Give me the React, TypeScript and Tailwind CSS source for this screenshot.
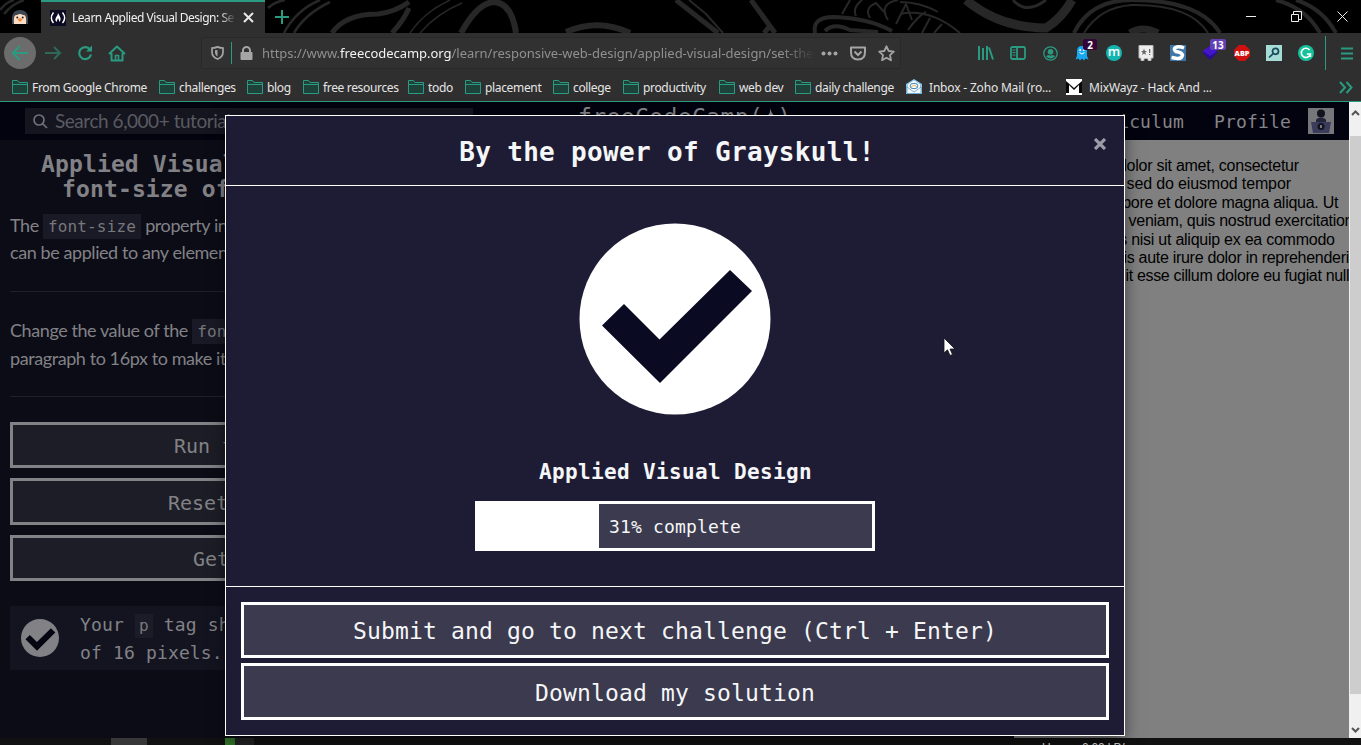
import React from "react";

const UI = "font-['Noto_Sans',sans-serif]";
const MONO = "font-['DejaVu_Sans_Mono',monospace]";
const LATO = "font-['Lato',sans-serif]";

function Doodles() {
  return (
    <svg className="absolute inset-0" width="1361" height="33" viewBox="0 0 1361 33" fill="none" stroke="#272727" strokeWidth="4">
      <path d="M0 10 Q6 2 14 0M4 14 Q12 4 24 0" strokeWidth="2.5" />
      <path d="M268 8 Q274 2 285 0M284 33 Q296 10 320 0M294 33 Q305 14 330 2" strokeWidth="2.5" />
      <path d="M332 33 Q345 14 378 14 Q395 12 409 2 M409 8 Q404 20 392 33" strokeWidth="5" />
      <path d="M420 33 Q436 14 462 3M410 33 Q424 12 450 0" strokeWidth="1.5" />
      <path d="M461 33 Q478 2 495 2 Q512 4 516 33" strokeWidth="6" />
      <path d="M566 32 Q598 18 630 33" strokeWidth="6" />
      <path d="M676 0 L718 33" strokeWidth="5" />
      <path d="M689 0 L706 14 L723 33" strokeWidth="2" />
      <path d="M751 0 L775 33M764 33 L770 26" strokeWidth="5" />
      <path d="M815 33 Q812 17 834 17 Q868 18 892 31M825 31 Q834 22 850 30 L878 32" strokeWidth="4" />
      <path d="M842 14 L850 0M856 16 Q852 8 862 0M870 18 Q864 8 876 3 L886 14M888 20 Q878 4 898 0M896 24 L906 4 L912 20M908 30 Q918 16 926 12M922 33 L930 18M934 33 L942 24 M938 12 Q920 2 900 2" strokeWidth="2" />
      <path d="M900 14 Q930 8 960 33" strokeWidth="2" />
      <path d="M966 0 Q1000 28 1046 28 Q1062 18 1072 0" strokeWidth="9" />
      <path d="M1013 0 Q1026 15 1046 0" strokeWidth="3" />
      <path d="M1074 33 Q1090 0 1132 0 Q1200 0 1220 33" strokeWidth="4" />
      <path d="M1084 33 Q1100 7 1132 5 Q1190 4 1208 33" strokeWidth="2" />
      <path d="M1130 33 Q1142 25 1158 33" strokeWidth="7" />
      <path d="M1276 0 Q1306 8 1320 33M1296 0 Q1322 8 1336 33" strokeWidth="4" />
    </svg>
  );
}

function TabBar() {
  return (
    <div className="relative h-[33px] shrink-0 bg-black">
      <Doodles />
      <div className="relative flex h-full items-center">
        <div className="flex w-[41px] justify-center pr-[2px]">
          <svg width="18" height="16" viewBox="0 0 18 16">
            <path d="M1 15V8Q2 1 9 1Q16 1 17 8V15Z" fill="#3d4752" />
            <path d="M3 15Q2 5 6 6Q9 4 12 6Q16 5 15 15Z" fill="#fbdcc4" />
            <circle cx="6.3" cy="8.5" r="1" fill="#222" />
            <circle cx="11.7" cy="8.5" r="1" fill="#222" />
            <path d="M6.5 10.5L9 9L11.5 10.5L9 13Z" fill="#f0883a" />
          </svg>
        </div>
        <div className="flex h-full w-[224px] items-center border-t-2 border-[#2a9a80] bg-[#2f2f2f] pl-[9px]">
          <svg width="16" height="16" viewBox="0 0 16 16">
            <rect width="16" height="16" fill="#0a0a23" />
            <path d="M3.5 2.5Q-.8 8 3.5 13M12.500 2.500Q16.800 8 12.500 13" stroke="#fff" strokeWidth="1.400" fill="none" />
            <path d="M8 3Q9.500 5.500 10.500 8Q11 10.500 9.500 12L8.500 9L8 8L6.500 12Q4.500 10 6 7.500Q8 5.500 8 3Z" fill="#fff" />
          </svg>
          <div className={`${UI} ml-[6px] w-[164px] overflow-hidden whitespace-nowrap text-[12px] tracking-[-0.47px] text-[#f0f0f0] mask-r-from-90% mask-r-to-100%`}>
            Learn Applied Visual Design: Se
          </div>
          <svg className="ml-[7px]" width="11" height="11" viewBox="0 0 11 11" stroke="#e8e8e8" strokeWidth="2">
            <path d="M1 1L10 10M10 1L1 10" />
          </svg>
        </div>
        <svg className="ml-[10px]" width="14" height="14" viewBox="0 0 14 14" stroke="#2a9a80" strokeWidth="2">
          <path d="M7 0V14M0 7H14" />
        </svg>
        <div className="ml-auto flex items-center gap-[35px] pr-[13px] text-[#eee]">
          <svg width="10" height="10" stroke="currentColor"><path d="M0 4.500H10" /></svg>
          <svg width="11" height="11" fill="none" stroke="currentColor"><path d="M.5 3.500H7.500V10.500H.5ZM2.500 3.500V.5H10.500V8.500H7.500" /></svg>
          <svg width="11" height="11" stroke="currentColor"><path d="M.5 .5L10.500 10.500M10.500 .5L.5 10.500" /></svg>
        </div>
      </div>
    </div>
  );
}

function Badge({ children, className }: { children: React.ReactNode; className: string }) {
  return (
    <span className={`absolute flex h-[11px] items-center justify-center rounded-[2px] text-[10px] font-bold leading-none text-white font-['Open_Sans',sans-serif] ${className}`}>
      {children}
    </span>
  );
}

function Cell({ children }: { children: React.ReactNode }) {
  return <div className="relative flex w-8 items-center justify-center">{children}</div>;
}

function NavBar() {
  return (
    <div className="flex h-10 shrink-0 items-center text-[#2a9a80]">
      <div className="ml-1 flex size-8 items-center justify-center rounded-full bg-[#6c6c6c]">
        <svg width="18" height="16" viewBox="0 0 18 16" fill="none" stroke="currentColor" strokeWidth="2.200"><path d="M17 8H2M9 1L2 8L9 15" /></svg>
      </div>
      <svg className="ml-[9px] opacity-55" width="17" height="14" viewBox="0 0 17 14" fill="none" stroke="currentColor" strokeWidth="2"><path d="M0 7H15M9 1L15 7L9 13" /></svg>
      <svg className="ml-[15px]" width="16" height="16" viewBox="0 0 16 16" fill="none" stroke="currentColor" strokeWidth="2.200">
        <path d="M13 4.500A6 6 0 1 0 14 9.500" /><path d="M15 .5V6.500H9Z" fill="currentColor" stroke="none" />
      </svg>
      <svg className="ml-[15px]" width="18" height="17" viewBox="0 0 18 17" fill="none" stroke="currentColor" strokeWidth="2">
        <path d="M1 9L9 1.500L17 9M3.500 8V15.500H14.500V8" strokeLinejoin="round" /><path d="M7.500 15V10.500H10.500V15" strokeWidth="1.600" />
      </svg>
      <div className="ml-[75px] flex h-8 w-[700px] items-center rounded-[2px] border border-[#292929] bg-[#313131] text-[#a5a5a5]">
        <svg className="ml-[9px]" width="13" height="14" viewBox="0 0 13 14" fill="none" stroke="currentColor" strokeWidth="1.700">
          <path d="M1 2Q4 2 6.500 .9Q9 2 12 2V6Q12 11 6.500 13Q1 11 1 6Z" /><path d="M6.500 4V10.500Q4 9 4 6.500V4.200Z" fill="currentColor" stroke="none" />
        </svg>
        <div className="ml-[7px] h-[22px] w-px bg-[#2a9a80]" />
        <svg className="ml-[8px]" width="13" height="14" viewBox="0 0 13 14"><path d="M3 7V4.500A3.500 3.500 0 0 1 10 4.500V7" fill="none" stroke="currentColor" strokeWidth="2" /><rect x=".5" y="6" width="12" height="8" rx="1" fill="currentColor" /></svg>
        <div className={`${UI} ml-[9px] w-[553px] overflow-hidden whitespace-nowrap pt-[2px] text-[13px] tracking-[-0.03px] text-[#909090] mask-r-from-94% mask-r-to-100%`}>
          https://www.<span className="text-[#f2f2f2]">freecodecamp.org</span>/learn/responsive-web-design/applied-visual-design/set-the
        </div>
        <svg className="ml-[6px]" width="17" height="5" fill="currentColor"><circle cx="2.500" cy="2.500" r="2" /><circle cx="8.500" cy="2.500" r="2" /><circle cx="14.500" cy="2.500" r="2" /></svg>
        <svg className="ml-[12px]" width="16" height="15" viewBox="0 0 16 15" fill="none" stroke="currentColor" strokeWidth="2"><path d="M1 1.500H15V6Q15 13.500 8 13.500Q1 13.500 1 6Z" strokeLinejoin="round" /><path d="M4.500 5.500L8 9L11.500 5.500" /></svg>
        <svg className="ml-[12px]" width="17" height="17" viewBox="0 0 17 17" fill="none" stroke="currentColor" strokeWidth="1.800" strokeLinejoin="round"><path d="M8.500 1.300L10.700 6L15.800 6.600L12 10.100L13 15.300L8.500 12.700L4 15.300L5 10.100L1.200 6.600L6.300 6Z" /></svg>
      </div>
      <div className="ml-[69px] flex h-full">
        <Cell><svg width="16" height="14" viewBox="0 0 16 14" stroke="currentColor" strokeWidth="2"><path d="M1 0V14M5 2V14M9 0V14M11 1.500L15 13.500" /></svg></Cell>
        <Cell><svg width="16" height="14" viewBox="0 0 16 14" fill="none" stroke="currentColor" strokeWidth="1.800"><rect x="1" y="1" width="14" height="12" rx="1.500" /><path d="M7 1V13" /><path d="M2.500 4H5.500M2.500 6.500H5.500M2.500 9H5.500" strokeWidth="1" /></svg></Cell>
        <Cell><svg width="15" height="15" viewBox="0 0 15 15" fill="none" stroke="currentColor"><circle cx="7.500" cy="7.500" r="6.700" strokeWidth="1.300" /><circle cx="7.500" cy="5.700" r="2.800" fill="currentColor" stroke="none" /><path d="M3 10.500Q4 8.700 5.500 9Q7.500 10 9.500 9Q11 8.700 12 10.500Q7.500 14.500 3 10.500Z" fill="currentColor" stroke="none" /></svg></Cell>
        <Cell>
          <svg width="14" height="16" viewBox="0 0 14 16"><path d="M2 6Q2 1 7 1Q12 1 12 6V11L13.500 14.500L10.500 13.500L9 15.500L7 13.500L5 15.500L3.500 13.500L.5 14.500L2 11Z" fill="#18a8ef" /><circle cx="5.200" cy="5" r="1" fill="#fff" /><circle cx="8.800" cy="5" r="1" fill="#fff" /><path d="M4.500 7.500Q7 10.500 9.500 7.500" stroke="#fff" fill="none" /></svg>
          <Badge className="left-[17px] top-[6px] w-[14px] bg-[#330538]">2</Badge>
        </Cell>
        <Cell><div className="flex size-4 items-center justify-center rounded-full bg-[#14b4b0] pb-[3px] font-['Open_Sans',sans-serif] text-[13px] font-semibold leading-none text-white">m</div></Cell>
        <Cell><svg width="16" height="16" viewBox="0 0 16 16"><path d="M1 .5H15V13H13V15.500H10V13.500H6V15.500H3V13H1Z" fill="#eee" stroke="#bbb" /><path d="M6 3.500L6.900 6H9L7.300 7.500L8 10L6 8.600L4 10L4.700 7.500L3 6H5.100ZM11 4H12.300V8H11ZM11 9H12.300V10H11Z" fill="#666" /></svg></Cell>
        <Cell><svg width="16" height="16" viewBox="0 0 16 16"><rect width="16" height="16" fill="#3f76a9" /><path d="M14 3Q9 1 5.500 2.500Q3 4.200 6 6.500Q12 7.500 12.500 10Q12 14 6 13.300L1.500 12.500" stroke="#fff" strokeWidth="3.500" fill="none" /></svg></Cell>
        <Cell>
          <svg width="16" height="14" viewBox="0 0 16 14"><path d="M8 0L15.500 6.500L8 14L.5 6.500Z" fill="#2a0c96" /><path d="M8 0L15.500 5L8 10L.5 5Z" fill="#4316c8" /></svg>
          <Badge className="left-[16px] top-[6px] w-[16px] bg-[#6340b4]">13</Badge>
        </Cell>
        <Cell><svg width="16" height="16" viewBox="0 0 16 16"><path d="M5 0H11L16 5V11L11 16H5L0 11V5Z" fill="#d01010" /><text x="8" y="10.700" textAnchor="middle" fontFamily="Open Sans" fontWeight="800" fontSize="7.300" fill="#fff">ABP</text></svg></Cell>
        <Cell><svg width="16" height="16" viewBox="0 0 16 16" fill="none" stroke="#1b4a5c" strokeWidth="1.700"><rect width="16" height="16" fill="#a5dcd6" stroke="none" /><circle cx="9.500" cy="6.300" r="3" /><path d="M7.200 8.600L3 12.500" /></svg></Cell>
        <Cell><svg width="16" height="16" viewBox="0 0 16 16" fill="none" stroke="#fff" strokeWidth="1.600"><circle cx="8" cy="8" r="8" fill="#15c39a" stroke="none" /><path d="M11.500 5A4.600 4.600 0 1 0 12.400 9H8.800M12.400 9V12" /></svg></Cell>
      </div>
      <div className="ml-[3px] h-[34px] w-px bg-[#2a9a80]" />
      <svg className="ml-[15px]" width="12" height="13" viewBox="0 0 12 13" stroke="currentColor" strokeWidth="2"><path d="M0 1.500H12M0 6.500H12M0 11.500H12" /></svg>
    </div>
  );
}

const bookmarks: [string, string][] = [
  ["From Google Chrome", "w-[147px]"],
  ["challenges", "w-[88px]"],
  ["blog", "w-[56px]"],
  ["free resources", "w-[105px]"],
  ["todo", "w-[57px]"],
  ["placement", "w-[88px]"],
  ["college", "w-[70px]"],
  ["productivity", "w-[96px]"],
  ["web dev", "w-[76px]"],
  ["daily challenge", "w-[111px]"],
];

function Bookmarks() {
  return (
    <div className={`${UI} flex h-[29px] shrink-0 items-center border-b border-[#2a9a80] pl-3 text-[12px] tracking-[-0.34px] text-[#e6e6e6] whitespace-nowrap`}>
      {bookmarks.map(([label, width]) => (
        <div key={label} className={`flex shrink-0 items-center gap-1 ${width}`}>
          <svg width="16" height="14" viewBox="0 0 16 14" fill="#1e4239" stroke="#2a9a80"><path d="M.5 13.500V.5H5.500L7 2.500H15.500V13.500ZM.5 4.500H15.500" /></svg>
          <span className="pt-[2px]">{label}</span>
        </div>
      ))}
      <div className="flex w-[160px] shrink-0 items-center gap-[7px] tracking-[-0.18px]">
        <svg width="16" height="16" viewBox="0 0 16 16"><path d="M8 0L16 5V15H0V5Z" fill="#8cc3e6" /><path d="M8 1.500L14 5.500V10L8 13L2 10V5.500Z" fill="#fff" /><ellipse cx="8" cy="7" rx="4" ry="2.700" fill="none" stroke="#3e83b5" /><path d="M5 8L8 6L11 8" stroke="#e9ae53" fill="none" /><path d="M1 8L8 13L15 8V14.500H1Z" fill="#f3f8fc" stroke="#4a92c2" strokeWidth=".7" /></svg>
        <span className="pt-[2px]">Inbox - Zoho Mail (ro...</span>
      </div>
      <div className="flex items-center gap-[7px] tracking-[-0.14px]">
        <svg width="16" height="16" viewBox="0 0 16 16"><rect width="16" height="16" fill="#fff" /><path d="M0 2L8 9L16 2V14H13V6L8 11L3 6V14H0Z" fill="#080808" /></svg>
        <span className="pt-[2px]">MixWayz - Hack And ...</span>
      </div>
      <svg className="ml-auto mr-[8px]" width="14" height="13" viewBox="0 0 14 13" fill="none" stroke="#2a9a80" strokeWidth="2"><path d="M1 1L6 6.500L1 12M7.500 1L12.500 6.500L7.500 12" /></svg>
    </div>
  );
}

function SiteHeader() {
  return (
    <div className={`${MONO} flex h-[38px] shrink-0 items-center bg-[#03030f] text-[18px] tracking-[0.15px] text-[#85858a]`}>
      <div className={`${LATO} ml-[25px] flex h-[26px] w-[448px] items-center bg-[#151520] pl-2 text-[19px] tracking-[-0.46px] text-[#5a5a60]`}>
        <svg width="15" height="15" viewBox="0 0 15 15" fill="none" stroke="#707078" strokeWidth="1.700"><circle cx="6" cy="6" r="5" /><path d="M9.500 9.500L14 14" /></svg>
        <span className="ml-[7px]">Search 6,000+ tutorials</span>
      </div>
      <span className="ml-[105px] pb-[8px] text-[23px] leading-[28px] tracking-[0.4px]">freeCodeCamp(<svg className="inline-block align-[-1px]" width="14" height="18" viewBox="0 0 14 18" fill="#85858a"><path d="M7 0Q8 4 11 8Q13 14 9 17L7 10L5 17Q0 13 4 8Q8 5 7 0Z" /></svg>)</span>
      <span className="ml-auto">Curriculum</span>
      <span className="ml-[30px]">Profile</span>
      <svg className="ml-[17px] mr-[15px]" width="26" height="26" viewBox="0 0 26 26">
        <rect width="26" height="26" fill="#77777b" />
        <circle cx="13" cy="5.500" r="4" fill="#13131f" />
        <path d="M8 16V12Q9 9.500 13 9.500Q17 9.500 18 12V16Z" fill="#24243a" />
        <path d="M3 14H23L21 25H5Z" fill="#3b3b5c" />
        <circle cx="13" cy="18.500" r="3.500" fill="#13131f" />
        <path d="M12 17H14V20H12Z" fill="#77777b" />
      </svg>
    </div>
  );
}

function Code({ children }: { children: React.ReactNode }) {
  return <code className={`${MONO} bg-[#1a1a26] px-[5px] py-[3px] text-[16px] leading-none tracking-[0.15px] text-[#77777c]`}>{children}</code>;
}

function Lesson() {
  return (
    <div className="w-[1014px] shrink-0 overflow-hidden whitespace-nowrap bg-[#0c0c17] pl-[10px] text-[#828286]">
      <h2 className={`${MONO} pt-[12px] text-[23px] font-bold leading-[25px] tracking-[0.13px]`}>
        <div className="pl-[31px]">Applied Visual Design: Set the</div>
        <div className="pl-[52px]">font-size of</div>
      </h2>
      <div className={`${LATO} mt-[10px] text-[18px] leading-[27px] tracking-[-0.42px]`}>
        <div className="h-[27px]">The <Code>font-size</Code> property in CSS</div>
        <div className="h-[27px]">can be applied to any element.</div>
      </div>
      <div className="mt-[25px] border-t border-[#20202a]" />
      <div className={`${LATO} mt-[24px] text-[18px] leading-[28px] tracking-[-0.42px]`}>
        <div className="h-[28px]">Change the value of the <Code>font-size</Code></div>
        <div className="h-[28px]">paragraph to 16px to make it</div>
      </div>
      <div className="mt-[24px] border-t border-[#20202a]" />
      <div className={`${MONO} mt-[25px] text-[20px]`}>
        <div className="flex h-[46px] items-center border-[3px] border-[#828286] bg-[#1d1d27] pl-[161px] pt-[2px]">Run the Tests</div>
        <div className="mt-[10px] flex h-[47px] items-center border-[3px] border-[#828286] bg-[#1d1d27] pl-[155px] pt-[2px]">Reset All Code</div>
        <div className="mt-[10px] flex h-[46px] items-center border-[3px] border-[#828286] bg-[#1d1d27] pl-[180px] pt-[2px]">Get Help</div>
      </div>
      <div className={`${MONO} mt-[25px] flex h-[64px] items-center bg-[#141421] pl-[11px] text-[18px] leading-[28px] tracking-[0.15px]`}>
        <svg width="38" height="38" viewBox="0 0 191 191"><circle cx="95.500" cy="95.500" r="95.500" fill="#828286" /><path d="M44.500 80.500L80 116L150.500 46.500L172.500 67.500L80.500 159.500L22.500 102Z" fill="#060613" /></svg>
        <div className="ml-[21px] pt-[2px]">
          <div>Your <span className="inline-block bg-[#1c1c28] px-[4px] text-[16px] leading-[24px] text-[#77777c]">p</span> tag should</div>
          <div>of 16 pixels.</div>
        </div>
      </div>
    </div>
  );
}

const preview: [string, string][] = [
  ["Lorem ipsum dolor sit amet, consectetur", "tracking-[-0.25px]"],
  ["adipiscing elit, sed do eiusmod tempor", "tracking-[-0.14px]"],
  ["incididunt ut labore et dolore magna aliqua. Ut", "tracking-[-0.26px]"],
  ["enim ad minim veniam, quis nostrud exercitation", "tracking-[-0.28px]"],
  ["ullamco laboris nisi ut aliquip ex ea commodo", "tracking-[-0.25px]"],
  ["consequat. Duis aute irure dolor in reprehenderit", "tracking-[-0.29px]"],
  ["in voluptate velit esse cillum dolore eu fugiat nulla", "tracking-[-0.33px]"],
];

function ScrollBar() {
  return (
    <div className="flex w-3 shrink-0 flex-col bg-[#f0f0f0]">
      <div className="flex h-[34px] justify-center pt-[8px]"><svg width="9" height="6" fill="none" stroke="#555" strokeWidth="2"><path d="M1 5L4.500 1.500L8 5" /></svg></div>
      <div className="ml-px h-[558px] bg-[#cdcdcd]" />
      <div className="flex flex-1 items-end justify-center pb-[5px]"><svg width="9" height="6" fill="none" stroke="#555" strokeWidth="2"><path d="M1 1L4.500 4.500L8 1" /></svg></div>
    </div>
  );
}

function Modal() {
  return (
    <div className={`${MONO} absolute left-[225px] top-[115px] flex h-[621px] w-[900px] flex-col border border-white bg-[#1e1c35] text-[#f5f6f7] shadow-[0_5px_15px_rgba(0,0,0,0.5)]`}>
      <div className="relative flex h-[70px] shrink-0 items-center justify-center border-b border-white pr-[16px] pt-[3px]">
        <h1 className="text-[26px] font-bold tracking-[0.33px] whitespace-pre">By the power of Grayskull!</h1>
        <svg className="absolute right-[18px] top-[22px]" width="12" height="12" stroke="#9c9ba8" strokeWidth="3.200"><path d="M1 1L11 11M11 1L1 11" /></svg>
      </div>
      <div className="flex h-[400px] shrink-0 flex-col items-center pt-[37px]">
        <svg width="192" height="192" viewBox="0 0 192 192"><circle cx="96" cy="96" r="95.500" fill="#fff" /><path d="M45 81L80.500 116.500L151 47L173 68L81 160L23 102.500Z" fill="#0a0a23" /></svg>
        <div className="mt-[43px] pl-px text-[21px] font-bold leading-[28px] tracking-[0.36px]">Applied Visual Design</div>
        <div className="mt-[15px] flex h-[50px] w-[400px] border-[3px] border-white bg-[#3b3a4e]">
          <div className="w-[121px] bg-white" />
          <span className="flex items-center pl-[10px] text-[18px] tracking-[0.16px]">31% complete</span>
        </div>
      </div>
      <div className="flex flex-1 flex-col border-t border-white px-[15px] pt-[15px] text-[23px] tracking-[0.15px]">
        <div className="flex h-[56px] items-center justify-center border-[3px] border-white bg-[#3b3a4e] pt-[2px]">Submit and go to next challenge (Ctrl + Enter)</div>
        <div className="mt-[5px] flex h-[57px] items-center justify-center border-[3px] border-white bg-[#3b3a4e] pt-[3px]">Download my solution</div>
      </div>
    </div>
  );
}

export default function App() {
  return (
    <div className="relative flex h-[745px] w-[1361px] flex-col overflow-hidden bg-[#2f2f2f]">
      <TabBar />
      <NavBar />
      <Bookmarks />
      <div className="flex h-[636px] shrink-0">
        <div className="flex w-[1349px] flex-col overflow-hidden">
          <SiteHeader />
          <div className="flex min-h-0 flex-1">
            <Lesson />
            <div className="flex-1 overflow-hidden whitespace-nowrap bg-[#808080] pl-[10px] pt-[17px] font-['Liberation_Sans',sans-serif] text-[16px] leading-[18.4px] text-black">
              {preview.map(([line, tracking]) => <div key={line} className={tracking}>{line}</div>)}
            </div>
          </div>
        </div>
        <ScrollBar />
      </div>
      <div className="flex h-[7px] shrink-0 overflow-hidden bg-[#111]">
        <div className="ml-[111px] w-9 bg-[#373737]" />
        <div className="ml-[78px] w-[10px] bg-[#337a2b]" />
        <div className="w-[19px] bg-[#252525]" />
        <div className="ml-[788px] whitespace-pre pt-[4px] font-['Liberation_Sans',sans-serif] text-[12px] leading-[12px] tracking-[-0.2px] text-[#ddd]">Up:       0.00 kB/s</div>
      </div>
      <Modal />
      <svg className="absolute left-[943px] top-[337px]" width="13" height="20" viewBox="0 0 13 20"><path d="M1 1V16L4.500 12.800L7 18.500L9.500 17.400L7 12H12Z" fill="#fff" stroke="#111" strokeWidth=".8" /></svg>
    </div>
  );
}
